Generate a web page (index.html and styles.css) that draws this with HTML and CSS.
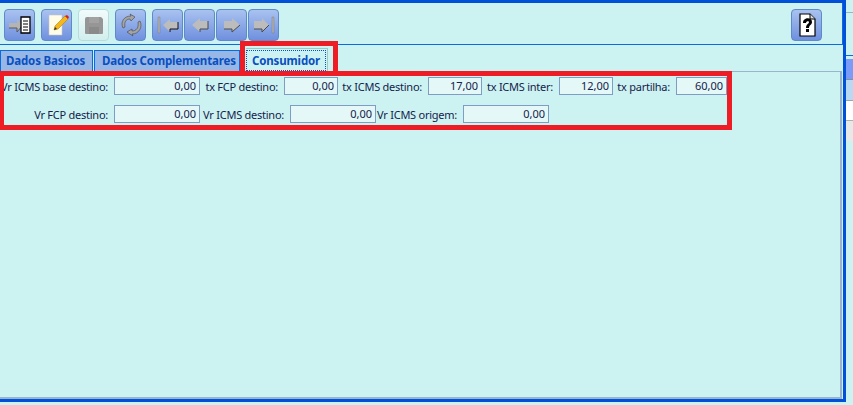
FILE: index.html
```html
<!DOCTYPE html>
<html lang="pt-BR">
<head>
  <meta charset="utf-8" />
  <meta name="viewport" content="width=device-width,initial-scale=1" />
  <title>Consumidor</title>
  <link rel="stylesheet" href="styles.css">
</head>
<body>
  <div id="frame">
    <div id="toolbar">
      <button class="tool">
        <svg viewBox="0 0 24 24" width="24" height="24"><path d="M1 10h8V6l6 6-6 7v-4H1z" fill="#b4b4b4"/><path d="M1 15h8v4l6-7" fill="none" stroke="#5a5a5a"/><path d="M13 4h9v16H13z" fill="#fff" stroke="#000" stroke-width="1.3"/><path d="M15 8h5M15 11h5M15 14h5M15 17h5" stroke="#000"/></svg>
      </button>
      <button class="tool">
        <svg viewBox="0 0 24 24" width="24" height="24"><path d="M4 2h13v20H4z" fill="#fffde8" stroke="#c8c8c8" stroke-width=".6"/><path d="M9 17l1-4L20 3l3 3-10 10z" fill="#f5b81c" stroke="#b5800c" stroke-width=".6"/><path d="M20 3l3 3 1-2-2-2z" fill="#d8201c"/><path d="M9 17l1-3 2 2z" fill="#333"/></svg>
      </button>
      <button class="tool off">
        <svg viewBox="0 0 24 24" width="24" height="24"><path d="M5 4h14l2 2v14a1 1 0 0 1-1 1H4a1 1 0 0 1-1-1V6a2 2 0 0 1 2-2z" fill="#969696"/><path d="M7 4h10v6H7z" fill="#a2a2a2"/><path d="M7 14h10v7H7z" fill="#8a8a8a"/></svg>
      </button>
      <button class="tool">
        <svg viewBox="0 0 24 24" width="24" height="24"><path d="M4 15C1 9 5 3 12 3l-1-2 5 3-4 4-1-2c-4 0-6 3-5 8z" fill="#a4a4a4" stroke="#444" stroke-width=".6"/><path d="M21 8c3 6-1 13-8 13l1 2-6-4 5-3 0 2c4 0 7-3 6-9z" fill="#a4a4a4" stroke="#444" stroke-width=".6"/></svg>
      </button>
      <div class="nav">
        <button class="tool">
          <svg viewBox="0 0 24 24" width="24" height="24"><path d="M2 4h2v16H2z" fill="#b0b0b0" stroke="#777" stroke-width=".4"/><path d="M7 12l7-6v3h8v7h-8v3z" fill="#bcbcbc"/><path d="M14 19v-3h8V9" fill="none" stroke="#000" stroke-width=".9"/></svg>
        </button>
        <button class="tool">
          <svg viewBox="0 0 24 24" width="24" height="24"><path d="M4 12l8-7v3h8v8h-8v3z" fill="#bcbcbc"/><path d="M12 19v-3h8V8" fill="none" stroke="#4a4a4a"/></svg>
        </button>
        <button class="tool">
          <svg viewBox="0 0 24 24" width="24" height="24"><path d="M20 12l-8-7v3H4v8h8v3z" fill="#bcbcbc"/><path d="M4 16h8v3l8-7" fill="none" stroke="#4a4a4a"/></svg>
        </button>
        <button class="tool">
          <svg viewBox="0 0 24 24" width="24" height="24"><path d="M17 12l-7-7v3H2v8h8v3z" fill="#bcbcbc"/><path d="M2 16h8v3l7-7" fill="none" stroke="#4a4a4a"/><path d="M20 4h2v16h-2z" fill="#b0b0b0" stroke="#777" stroke-width=".4"/></svg>
        </button>
      </div>
      <button class="tool tool-help">
        <svg viewBox="0 0 24 24" width="24" height="24"><path d="M5 1h10l5 5v17H5z" fill="#fff" stroke="#000" stroke-width="1.2"/><path d="M15 1v5h5" fill="#ddd" stroke="#000"/><path d="M8 10c0-6 9-6 9-1 0 3-3 3-3 6h-3c0-4 3-4 3-6 0-1-3-1-3 1zM11 16h3v3h-3z" fill="#000"/></svg>
      </button>
    </div>

    <div id="tabs">
      <div class="tab tab-basic">Dados Basicos</div>
      <div class="tab tab-comp">Dados Complementares</div>
      <div class="tab active"><span>Consumidor</span></div>
    </div>

    <div id="page">
      <div class="row">
        <label class="lbl l114">Vr ICMS base destino:</label><output class="val w86">0,00</output>
        <label class="lbl l84">tx FCP destino:</label><output class="val w54">0,00</output>
        <label class="lbl l90">tx ICMS destino:</label><output class="val w54">17,00</output>
        <label class="lbl l77">tx ICMS inter:</label><output class="val w54">12,00</output>
        <label class="lbl l63">tx partilha:</label><output class="val w51">60,00</output>
      </div>
      <div class="row">
        <label class="lbl l114">Vr FCP destino:</label><output class="val w86">0,00</output>
        <label class="lbl l90">Vr ICMS destino:</label><output class="val w86">0,00</output>
        <label class="lbl l87">Vr ICMS origem:</label><output class="val w86">0,00</output>
      </div>
    </div>

    <div class="mark mark-tab"></div>
    <div class="mark mark-fields"></div>
  </div>
  <div id="side">
    <div class="strip s-top"></div>
    <div class="strip s-blue"></div>
    <div class="strip s-light"></div>
    <div class="strip s-white"></div>
    <div class="strip s-grey"></div>
  </div>
</body>
</html>
```

FILE: styles.css
```css
html,body{margin:0;height:100%;overflow:hidden;background:#cdf2f2;font-family:"Noto Sans",Arial,sans-serif;font-size:11px;color:#14224a}
body{display:flex;align-items:flex-start}
#frame{position:relative;width:846px;height:402px;flex:none;box-sizing:border-box;border:3px solid #0050d8;border-left:0;display:flex;flex-direction:column}
#side{flex:1;height:405px;display:flex;flex-direction:column}
.strip{flex:none;box-sizing:border-box}
.s-top{margin-top:12px;height:44px;border-top:1px solid #9ab4c8;border-bottom:1px solid #0a6ae0}
.s-blue{margin-top:3px;height:21px;background:#7a9cf8;border-bottom:1px solid #80909c}
.s-light{height:21px;background:#b8d8f4;border-bottom:1px solid #9aa8a8}
.s-white{height:20px;background:#fff;border-bottom:1px solid #a8b4b4}
.s-grey{height:20px;background:#e8e8e8}
#toolbar{display:flex;align-items:flex-start;height:42px;padding:6px 0 0 4px;box-sizing:border-box;border-bottom:1px solid #0a6ae0;border-right:1px solid #0a6ae0;flex:none;gap:6px}
.tool{width:31px;height:32px;padding:0;border:1px solid #5d8ac8;border-radius:4px;background:linear-gradient(#a9c2f0,#6f90de);display:flex;align-items:center;justify-content:center}
.tool.off{background:linear-gradient(#f2fbfb,#d2eeee);border-color:#b8dcdc}
.nav{display:flex;gap:1px}
.tool-help{margin-left:auto;margin-right:20px}
#tabs{display:flex;align-items:flex-end;height:26px;flex:none;gap:1px}
.tab{height:21px;line-height:20px;box-sizing:border-box;background:#97b8e6;border:1px solid #0a6ae0;border-bottom:0;font-size:11.5px;letter-spacing:-.15px;font-weight:bold;color:#0a4fc0;white-space:nowrap}
.tab-basic{width:93px;padding-left:5px}
.tab-comp{width:146px;padding-left:7px}
.tab.active{margin-left:5px;width:82px;background:#cdf2f2;height:23px;padding:1px 1px 0 0;border-color:#9cc8c8;border-left:0}
.tab.active span{display:block;line-height:19px;padding-left:5px;border:1px dotted #0a4fc0}
#page{flex:1;border:1px solid #9ab4cc;border-width:1px 2px 2px 0;margin-right:1px;padding-top:5px}
.row{display:flex;align-items:center;height:18px;margin-bottom:10px}
.lbl{box-sizing:border-box;padding-right:6px;text-align:right;white-space:nowrap;letter-spacing:-.25px}
.l114{width:114px}
.l90{width:90px}
.l87{width:87px}
.l84{width:84px}
.l77{width:77px}
.l63{width:63px}
.val{height:18px;box-sizing:border-box;border:1px solid #7f9cc4;background:#e4f8f8;text-align:right;padding-right:3px;line-height:16px;display:block}
.w86{width:86px}
.w54{width:54px}
.w51{width:51px}
.mark{position:absolute;border:5px solid #ee1c25;box-sizing:border-box}
.mark-tab{left:240px;top:38px;width:98px;height:33px;border-bottom:0}
.mark-fields{left:0;top:68px;width:732px;height:59px;border-left-width:4px}
```
